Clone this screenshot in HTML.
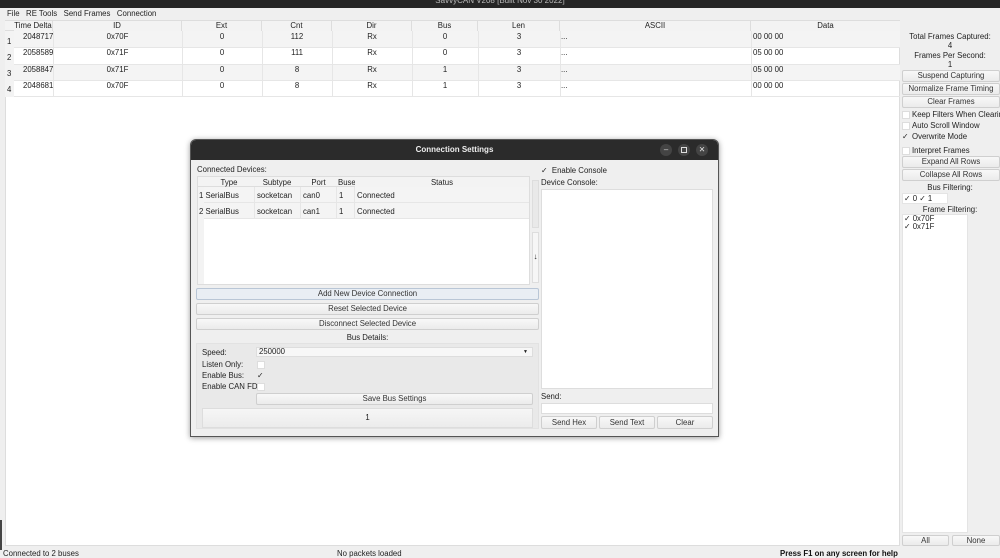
<!DOCTYPE html>
<html><head><meta charset="utf-8"><style>
*{box-sizing:border-box;margin:0;padding:0}
body{width:1000px;height:558px;overflow:hidden;background:#efefef;font-family:"Liberation Sans","DejaVu Sans",sans-serif;font-size:7.8px;color:#222;position:relative}
.a{position:absolute;white-space:nowrap}
.btn{position:absolute;background:linear-gradient(#f8f8f8,#ebebeb);border:1px solid #cfcfcf;border-radius:2px;text-align:center;font-size:7.8px;line-height:10px;color:#333}
.cb{position:absolute;width:8px;height:8px;background:#fff;border:1px solid #ddd}
.c{text-align:center}
.th{position:absolute;top:21px;height:10px;line-height:10px;text-align:center;border-right:1px solid #ddd;background:#f3f3f3}
</style></head><body>
<div class="a" style="left:0;top:0;width:1000px;height:8px;background:#262626"></div>
<div class="a c" style="left:0;top:-4px;width:1000px;color:#bbb;font-size:8px">SavvyCAN V208 [Built Nov 30 2022]</div>
<div class="a" style="left:7px;top:9px">File&nbsp;&nbsp; RE Tools&nbsp;&nbsp; Send Frames&nbsp;&nbsp; Connection</div>
<div class="a" style="left:0;top:520px;width:2px;height:30px;background:#444"></div>
<!-- main table -->
<div class="a" style="left:5px;top:20px;width:895px;height:526px;background:#fff;border:1px solid #ddd"></div>
<div class="a" style="left:5px;top:21px;width:895px;height:10px;background:#f3f3f3;border-bottom:1px solid #ddd"></div>
<div class="a" style="left:5px;top:31px;width:9px;height:66px;background:#f3f3f3"></div>
<div class="th" style="left:14px;width:39px">Time Delta</div>
<div class="th" style="left:53px;width:129px">ID</div>
<div class="th" style="left:182px;width:80px">Ext</div>
<div class="th" style="left:262px;width:70px">Cnt</div>
<div class="th" style="left:332px;width:80px">Dir</div>
<div class="th" style="left:412px;width:66px">Bus</div>
<div class="th" style="left:478px;width:82px">Len</div>
<div class="th" style="left:560px;width:191px">ASCII</div>
<div class="th" style="left:751px;width:149px;border:0">Data</div>
<div class="a" style="left:14px;top:31px;width:886px;height:16px;background:#f4f4f4"></div>
<div class="a" style="left:14px;top:64px;width:886px;height:16px;background:#f4f4f4"></div>
<div class="a" style="left:14px;top:47px;width:886px;border-top:1px solid #e6e6e6"></div>
<div class="a" style="left:14px;top:64px;width:886px;border-top:1px solid #e6e6e6"></div>
<div class="a" style="left:14px;top:80px;width:886px;border-top:1px solid #e6e6e6"></div>
<div class="a" style="left:14px;top:96px;width:886px;border-top:1px solid #e6e6e6"></div>
<div class="a" style="left:53px;top:31px;height:66px;border-left:1px solid #e6e6e6"></div>
<div class="a" style="left:182px;top:31px;height:66px;border-left:1px solid #e6e6e6"></div>
<div class="a" style="left:262px;top:31px;height:66px;border-left:1px solid #e6e6e6"></div>
<div class="a" style="left:332px;top:31px;height:66px;border-left:1px solid #e6e6e6"></div>
<div class="a" style="left:412px;top:31px;height:66px;border-left:1px solid #e6e6e6"></div>
<div class="a" style="left:478px;top:31px;height:66px;border-left:1px solid #e6e6e6"></div>
<div class="a" style="left:560px;top:31px;height:66px;border-left:1px solid #e6e6e6"></div>
<div class="a" style="left:751px;top:31px;height:66px;border-left:1px solid #e6e6e6"></div>
<div class="a" style="left:7px;top:37px">1</div><div class="a" style="left:7px;top:53px">2</div><div class="a" style="left:7px;top:69px">3</div><div class="a" style="left:7px;top:85px">4</div>
<div class="a" style="left:23px;top:32px">2048717</div><div class="a" style="left:23px;top:48px">2058589</div><div class="a" style="left:23px;top:65px">2058847</div><div class="a" style="left:23px;top:81px">2048681</div>
<div class="a c" style="left:53px;top:32px;width:129px">0x70F</div><div class="a c" style="left:53px;top:48px;width:129px">0x71F</div><div class="a c" style="left:53px;top:65px;width:129px">0x71F</div><div class="a c" style="left:53px;top:81px;width:129px">0x70F</div>
<div class="a c" style="left:182px;top:32px;width:80px">0</div><div class="a c" style="left:182px;top:48px;width:80px">0</div><div class="a c" style="left:182px;top:65px;width:80px">0</div><div class="a c" style="left:182px;top:81px;width:80px">0</div>
<div class="a c" style="left:262px;top:32px;width:70px">112</div><div class="a c" style="left:262px;top:48px;width:70px">111</div><div class="a c" style="left:262px;top:65px;width:70px">8</div><div class="a c" style="left:262px;top:81px;width:70px">8</div>
<div class="a c" style="left:332px;top:32px;width:80px">Rx</div><div class="a c" style="left:332px;top:48px;width:80px">Rx</div><div class="a c" style="left:332px;top:65px;width:80px">Rx</div><div class="a c" style="left:332px;top:81px;width:80px">Rx</div>
<div class="a c" style="left:412px;top:32px;width:66px">0</div><div class="a c" style="left:412px;top:48px;width:66px">0</div><div class="a c" style="left:412px;top:65px;width:66px">1</div><div class="a c" style="left:412px;top:81px;width:66px">1</div>
<div class="a c" style="left:478px;top:32px;width:82px">3</div><div class="a c" style="left:478px;top:48px;width:82px">3</div><div class="a c" style="left:478px;top:65px;width:82px">3</div><div class="a c" style="left:478px;top:81px;width:82px">3</div>
<div class="a" style="left:561px;top:32px">...</div><div class="a" style="left:561px;top:48px">...</div><div class="a" style="left:561px;top:65px">...</div><div class="a" style="left:561px;top:81px">...</div>
<div class="a" style="left:753px;top:32px">00 00 00</div><div class="a" style="left:753px;top:48px">05 00 00</div><div class="a" style="left:753px;top:65px">05 00 00</div><div class="a" style="left:753px;top:81px">00 00 00</div>
<!-- right panel -->
<div class="a c" style="left:900px;top:32px;width:100px">Total Frames Captured:</div>
<div class="a c" style="left:900px;top:41px;width:100px">4</div>
<div class="a c" style="left:900px;top:51px;width:100px">Frames Per Second:</div>
<div class="a c" style="left:900px;top:60px;width:100px">1</div>
<div class="btn" style="left:902px;top:70px;width:98px;height:12px">Suspend Capturing</div>
<div class="btn" style="left:902px;top:83px;width:98px;height:12px">Normalize Frame Timing</div>
<div class="btn" style="left:902px;top:96px;width:98px;height:12px">Clear Frames</div>
<div class="cb" style="left:902px;top:111px"></div><div class="a" style="left:912px;top:110px">Keep Filters When Clearing</div>
<div class="cb" style="left:902px;top:122px"></div><div class="a" style="left:912px;top:121px">Auto Scroll Window</div>
<div class="a" style="left:902px;top:132px">✓</div><div class="a" style="left:912px;top:132px">Overwrite Mode</div>
<div class="cb" style="left:902px;top:147px"></div><div class="a" style="left:912px;top:146px">Interpret Frames</div>
<div class="btn" style="left:902px;top:156px;width:98px;height:12px">Expand All Rows</div>
<div class="btn" style="left:902px;top:169px;width:98px;height:12px">Collapse All Rows</div>
<div class="a c" style="left:900px;top:183px;width:100px">Bus Filtering:</div>
<div class="a" style="left:902px;top:193px;width:46px;height:11px;background:#fff;border:1px solid #e4e4e4;padding-left:1px">✓ 0 ✓ 1</div>
<div class="a c" style="left:900px;top:205px;width:100px">Frame Filtering:</div>
<div class="a" style="left:902px;top:214px;width:66px;height:319px;background:#fff;border:1px solid #e4e4e4;line-height:8px;padding-left:1px">✓ 0x70F<br>✓ 0x71F</div>
<div class="btn" style="left:902px;top:535px;width:47px;height:11px">All</div>
<div class="btn" style="left:952px;top:535px;width:48px;height:11px">None</div>
<!-- status -->
<div class="a" style="left:3px;top:549px">Connected to 2 buses</div>
<div class="a" style="left:337px;top:549px">No packets loaded</div>
<div class="a" style="left:780px;top:549px;font-weight:bold;color:#111">Press F1 on any screen for help</div>
<!-- dialog -->
<div class="a" style="left:190px;top:139px;width:529px;height:298px;background:#efefef;border:1px solid #555;border-radius:6px 6px 0 0;box-shadow:0 1px 6px rgba(0,0,0,.4);overflow:hidden">
<div class="a" style="left:0;top:0;width:529px;height:20px;background:#2b2b2b"></div>
<div class="a c" style="left:0;top:5px;width:527px;color:#eee;font-weight:bold;font-size:8px">Connection Settings</div>
<div class="a" style="left:469px;top:4px;width:12px;height:12px;border-radius:6px;background:#444;color:#ddd;text-align:center;line-height:11px">–</div>
<div class="a" style="left:487px;top:4px;width:12px;height:12px;border-radius:6px;background:#444"><div class="a" style="left:3px;top:3px;width:6px;height:6px;border:1px solid #ddd"></div></div>
<div class="a" style="left:505px;top:4px;width:12px;height:12px;border-radius:6px;background:#444;color:#ddd;text-align:center;line-height:12px">✕</div>
</div>
<div class="a" style="left:197px;top:165px">Connected Devices:</div>
<div class="a" style="left:197px;top:176px;width:333px;height:109px;background:#fff;border:1px solid #ddd"></div>
<div class="a" style="left:198px;top:177px;width:331px;height:10px;background:#f3f3f3;border-bottom:1px solid #ddd"></div>
<div class="a" style="left:198px;top:187px;width:6px;height:97px;background:#f3f3f3"></div>
<div class="a" style="left:204px;top:187px;width:325px;height:16px;background:#f4f4f4;border-bottom:1px solid #e6e6e6"></div>
<div class="a" style="left:204px;top:203px;width:325px;height:16px;background:#f4f4f4;border-bottom:1px solid #e6e6e6"></div>
<div class="a c" style="left:204px;top:178px;width:50px">Type</div>
<div class="a c" style="left:254px;top:178px;width:46px">Subtype</div>
<div class="a c" style="left:300px;top:178px;width:37px">Port</div>
<div class="a" style="left:338px;top:178px">Buses</div>
<div class="a c" style="left:355px;top:178px;width:174px;background:#f3f3f3">Status</div>
<div class="a" style="left:199px;top:191px">1 SerialBus</div><div class="a" style="left:257px;top:191px">socketcan</div><div class="a" style="left:303px;top:191px">can0</div><div class="a" style="left:339px;top:191px">1</div><div class="a" style="left:357px;top:191px">Connected</div>
<div class="a" style="left:199px;top:207px">2 SerialBus</div><div class="a" style="left:257px;top:207px">socketcan</div><div class="a" style="left:303px;top:207px">can1</div><div class="a" style="left:339px;top:207px">1</div><div class="a" style="left:357px;top:207px">Connected</div>
<div class="a" style="left:254px;top:187px;height:32px;border-left:1px solid #e6e6e6"></div>
<div class="a" style="left:300px;top:187px;height:32px;border-left:1px solid #e6e6e6"></div>
<div class="a" style="left:336px;top:187px;height:32px;border-left:1px solid #e6e6e6"></div>
<div class="a" style="left:354px;top:187px;height:32px;border-left:1px solid #e6e6e6"></div>
<div class="a" style="left:532px;top:180px;width:7px;height:48px;background:#e9e9e9;border:1px solid #ddd"></div>
<div class="a" style="left:532px;top:232px;width:7px;height:51px;background:#f6f6f6;border:1px solid #ddd;font-size:8px;line-height:48px;text-align:center">↓</div>
<div class="btn" style="left:196px;top:288px;width:343px;height:12px;background:#e9eef4;border-color:#b9c6d6">Add New Device Connection</div>
<div class="btn" style="left:196px;top:303px;width:343px;height:12px">Reset Selected Device</div>
<div class="btn" style="left:196px;top:318px;width:343px;height:12px">Disconnect Selected Device</div>
<div class="a c" style="left:196px;top:333px;width:343px">Bus Details:</div>
<div class="a" style="left:196px;top:343px;width:343px;height:86px;background:#e9e9e9;border:1px solid #e2e2e2"></div>
<div class="a" style="left:202px;top:348px">Speed:</div>
<div class="a" style="left:256px;top:347px;width:277px;height:10px;background:#f7f7f7;border:1px solid #ddd;padding-left:2px;line-height:8px">250000<span style="position:absolute;right:4px;font-size:5px">▼</span></div>
<div class="a" style="left:202px;top:360px">Listen Only:</div><div class="cb" style="left:257px;top:361px"></div>
<div class="a" style="left:202px;top:371px">Enable Bus:</div><div class="a" style="left:257px;top:371px">✓</div>
<div class="a" style="left:202px;top:382px">Enable CAN FD:</div><div class="cb" style="left:257px;top:383px"></div>
<div class="btn" style="left:256px;top:393px;width:277px;height:12px">Save Bus Settings</div>
<div class="a c" style="left:202px;top:408px;width:331px;height:20px;background:linear-gradient(#f6f6f6,#ececec);border:1px solid #ddd;line-height:18px">1</div>
<div class="a" style="left:541px;top:166px">✓&nbsp; Enable Console</div>
<div class="a" style="left:541px;top:178px">Device Console:</div>
<div class="a" style="left:541px;top:189px;width:172px;height:200px;background:#fff;border:1px solid #ddd"></div>
<div class="a" style="left:541px;top:392px">Send:</div>
<div class="a" style="left:541px;top:403px;width:172px;height:11px;background:#fff;border:1px solid #ddd"></div>
<div class="btn" style="left:541px;top:416px;width:56px;height:13px;line-height:11px">Send Hex</div>
<div class="btn" style="left:599px;top:416px;width:56px;height:13px;line-height:11px">Send Text</div>
<div class="btn" style="left:657px;top:416px;width:56px;height:13px;line-height:11px">Clear</div>
</body></html>
